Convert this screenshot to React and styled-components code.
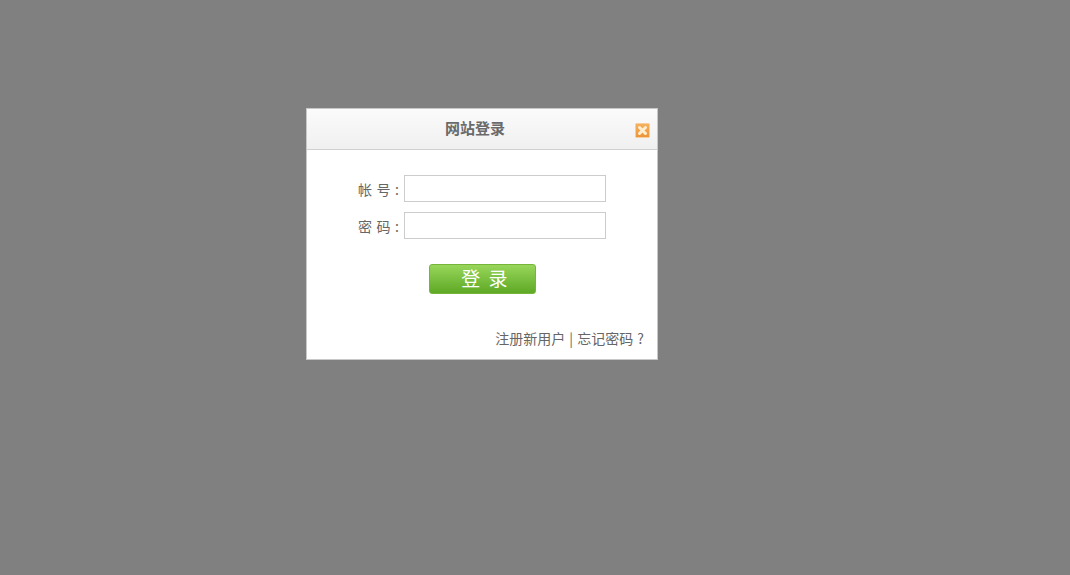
import styled, { createGlobalStyle } from "styled-components"

const GlobalStyle = createGlobalStyle`
  html, body {
    margin: 0;
    padding: 0;
    background: #808080;
    font-family: "Noto Sans CJK SC", "Liberation Sans", sans-serif;
  }
`

const Page = styled.div`
  width: 100vw;
  height: 100vh;
  box-sizing: border-box;
  padding: 108px 0 0 306px;
  overflow: hidden;
`

const Dialog = styled.div`
  width: 352px;
  height: 252px;
  box-sizing: border-box;
  border: 1px solid #c8c8c8;
  background: #fff;
  display: flex;
  flex-direction: column;
`

const Header = styled.div`
  height: 41px;
  flex: none;
  box-sizing: border-box;
  border-bottom: 1px solid #d0d0d0;
  background: linear-gradient(#fbfbfb, #f0f0f0);
  display: flex;
  align-items: center;
  padding: 0 7px 0 8px;
`

const Title = styled.h1`
  flex: 1;
  margin: 0;
  padding-bottom: 3px;
  font-size: 15px;
  font-weight: 700;
  line-height: 37px;
  text-align: center;
  color: #6a6a6a;
`

const Close = styled.a`
  display: block;
  width: 15px;
  height: 15px;
  margin-top: 3px;
  line-height: 0;
  cursor: pointer;
`

const Form = styled.form`
  display: flex;
  flex-direction: column;
  gap: 10px;
  padding-top: 25px;
  flex: 1;
`

const Row = styled.div`
  display: flex;
  align-items: center;
  gap: 5px;
`

const Label = styled.label`
  width: 92px;
  text-align: right;
  font-size: 14px;
  color: #666;
  word-spacing: 1.4px;
  white-space: pre;
`

const Input = styled.input`
  width: 202px;
  height: 27px;
  box-sizing: border-box;
  border: 1px solid #ccc;
  background: #fff;
  padding: 0 4px;
  outline: none;
`

const Actions = styled.div`
  display: flex;
  padding: 15px 0 0 122px;
`

const Submit = styled.button`
  width: 107px;
  height: 30px;
  padding: 0 0 2px 4px;
  border: 1px solid #74b53a;
  border-radius: 3px;
  background: linear-gradient(#97d65a, #5fa926);
  color: #fff;
  font-family: inherit;
  font-size: 19px;
  line-height: 26px;
  word-spacing: 4px;
  cursor: pointer;
  white-space: pre;
`

const Footer = styled.div`
  margin-top: auto;
  padding: 0 13px 11px 0;
  text-align: right;
  font-size: 14px;
  line-height: 20px;
  word-spacing: 1px;
  color: #666;
`

const FooterLink = styled.a`
  color: #666;
  text-decoration: none;
  cursor: pointer;
`

const CloseIcon = () => (
  <svg width="15" height="15" viewBox="0 0 15 15">
    <defs>
      <linearGradient id="closeFill" x1="0" y1="0" x2="0" y2="1">
        <stop offset="0" stopColor="#f5b260" />
        <stop offset="1" stopColor="#ec9436" />
      </linearGradient>
    </defs>
    <rect x="0.5" y="0.5" width="14" height="14" rx="1" fill="url(#closeFill)" stroke="#f8cf9c" />
    <path d="M4.5 4.5 L10.5 10.5 M10.5 4.5 L4.5 10.5" stroke="#ffeed2" strokeWidth="3" strokeLinecap="round" />
  </svg>
)

const App = () => {
  return (
    <Page>
      <GlobalStyle />
      <Dialog>
        <Header>
          <Title>网站登录</Title>
          <Close><CloseIcon /></Close>
        </Header>
        <Form>
          <Row>
            <Label>帐 号 :</Label>
            <Input type="text" />
          </Row>
          <Row>
            <Label>密 码 :</Label>
            <Input type="password" />
          </Row>
          <Actions>
            <Submit type="button">登 录</Submit>
          </Actions>
          <Footer>
            <FooterLink>注册新用户</FooterLink> | <FooterLink>忘记密码 ?</FooterLink>
          </Footer>
        </Form>
      </Dialog>
    </Page>
  )
}

export default App
